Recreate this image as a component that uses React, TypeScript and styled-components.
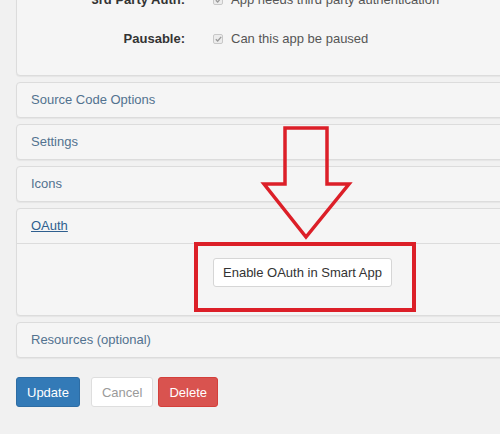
import React from "react";
import styled, { createGlobalStyle } from "styled-components";

const GlobalStyle = createGlobalStyle`
  html, body {
    margin: 0;
    padding: 0;
    background: #f1f1f1;
    overflow: hidden;
    font-family: "Liberation Sans", Arial, sans-serif;
    font-size: 13px;
    color: #333;
  }
`;

const Page = styled.div`
  position: relative;
  display: flow-root;
  width: 500px;
  height: 434px;
  padding-left: 16px;
  box-sizing: border-box;
`;

const Panel = styled.div<{ $first?: boolean }>`
  margin-right: -12px;
  margin-top: ${(p) => (p.$first ? "-21px" : "0")};
  margin-bottom: 6px;
  background: #f5f5f5;
  border: 1px solid #dcdcdc;
  border-radius: 4px;
  box-shadow: 0 1px 1px rgba(0, 0, 0, 0.05);
`;

const FormBody = styled.div`
  padding: 0 0 17px 0;
`;

const FormRow = styled.div`
  display: grid;
  grid-template-columns: 168px 1fr;
  column-gap: 28px;
  align-items: center;
  height: 39px;
`;

const Label = styled.div`
  text-align: right;
  font-weight: bold;
  color: #333;
`;

const CheckLine = styled.div`
  display: flex;
  align-items: center;
  gap: 8px;
  color: #555;
`;

const Check = styled.span`
  width: 10px;
  height: 10px;
  box-sizing: border-box;
  border: 1px solid #c8c8c8;
  border-radius: 2px;
  background: #ececec;
  display: inline-flex;
  align-items: center;
  justify-content: center;
`;

const Heading = styled.div<{ $open?: boolean }>`
  height: 34px;
  line-height: 34px;
  padding: 0 14px;
  font-size: 13px;
  color: ${(p) => (p.$open ? "#2f5f8f" : "#52728f")};
  text-decoration: ${(p) => (p.$open ? "underline" : "none")};
  border-bottom: ${(p) => (p.$open ? "1px solid #dcdcdc" : "none")};
`;

const OAuthBody = styled.div`
  display: grid;
  grid-template-columns: 168px auto;
  column-gap: 28px;
  padding: 14px 0 28px 0;
  justify-items: start;
`;

const DefaultButton = styled.button`
  grid-column: 2;
  height: 29px;
  padding: 0 9px;
  font-family: "Liberation Sans", Arial, sans-serif;
  font-size: 13px;
  color: #333;
  background: #fff;
  border: 1px solid #d6d6d6;
  border-radius: 3px;
`;

const Actions = styled.div`
  display: flex;
  align-items: center;
  margin-top: 19px;
`;

const ActionButton = styled.button<{ $variant: "primary" | "cancel" | "danger"; $gap: number }>`
  height: 30px;
  padding: 0 10px;
  margin-right: ${(p) => p.$gap}px;
  font-family: "Liberation Sans", Arial, sans-serif;
  font-size: 13px;
  border-radius: 3px;
  border: 1px solid
    ${(p) =>
      p.$variant === "primary" ? "#2e6da4" : p.$variant === "danger" ? "#d43f3a" : "#dedede"};
  background: ${(p) =>
    p.$variant === "primary" ? "#337ab7" : p.$variant === "danger" ? "#d9534f" : "#fff"};
  color: ${(p) => (p.$variant === "cancel" ? "#9a9a9a" : "#fff")};
`;

const Overlay = styled.svg`
  position: absolute;
  left: 0;
  top: 0;
  pointer-events: none;
`;

const CheckMark = () => (
  <svg width="7" height="6" viewBox="0 0 7 6">
    <path d="M0.8 3.2 L2.7 5 L6.2 0.8" fill="none" stroke="#9a9a9a" strokeWidth="1.3" />
  </svg>
);

export default function App() {
  return (
    <>
      <GlobalStyle />
      <Page>
        <Panel $first>
          <FormBody>
            <FormRow>
              <Label>3rd Party Auth:</Label>
              <CheckLine>
                <Check>
                  <CheckMark />
                </Check>
                App needs third party authentication
              </CheckLine>
            </FormRow>
            <FormRow>
              <Label>Pausable:</Label>
              <CheckLine>
                <Check>
                  <CheckMark />
                </Check>
                Can this app be paused
              </CheckLine>
            </FormRow>
          </FormBody>
        </Panel>
        <Panel>
          <Heading>Source Code Options</Heading>
        </Panel>
        <Panel>
          <Heading>Settings</Heading>
        </Panel>
        <Panel>
          <Heading>Icons</Heading>
        </Panel>
        <Panel>
          <Heading $open>OAuth</Heading>
          <OAuthBody>
            <DefaultButton>Enable OAuth in Smart App</DefaultButton>
          </OAuthBody>
        </Panel>
        <Panel>
          <Heading>Resources (optional)</Heading>
        </Panel>
        <Actions>
          <ActionButton $variant="primary" $gap={11}>Update</ActionButton>
          <ActionButton $variant="cancel" $gap={5}>Cancel</ActionButton>
          <ActionButton $variant="danger" $gap={0}>Delete</ActionButton>
        </Actions>
        <Overlay width="500" height="434" viewBox="0 0 500 434">
          <path
            d="M285 128 L327 128 L327 184 L349 184 L306 237 L264 184 L285 184 Z"
            fill="none"
            stroke="#dc1f28"
            strokeWidth="3.5"
            strokeLinejoin="miter"
          />
          <rect x="196" y="244" width="218" height="66" fill="none" stroke="#dc1f28" strokeWidth="4" />
        </Overlay>
      </Page>
    </>
  );
}
